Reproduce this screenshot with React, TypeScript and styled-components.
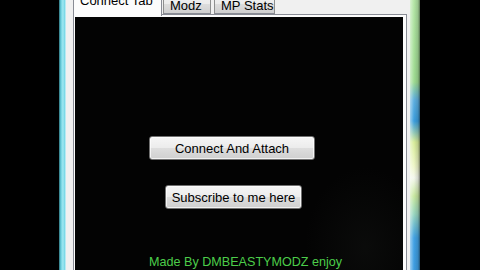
import styled, { createGlobalStyle } from 'styled-components';

const GlobalStyle = createGlobalStyle`
  html, body {
    margin: 0;
    padding: 0;
    background: #000;
    overflow: hidden;
  }
  body {
    font-family: "Liberation Sans", Arial, sans-serif;
  }
`;

const Screen = styled.div`
  width: 480px;
  height: 270px;
  display: flex;
  background: #000;
  overflow: hidden;
`;

const Window = styled.div`
  margin-left: 59px;
  width: 361px;
  height: 300px;
  margin-top: -8px;
  display: flex;
`;

const LeftGlass = styled.div`
  width: 7px;
  background: linear-gradient(
    to right,
    #2a6e78 0%,
    #68cedd 25%,
    #9fe8f2 55%,
    #7ad8e6 80%,
    #d8f4f8 100%
  );
`;

const RightGlass = styled.div`
  width: 10px;
  background: linear-gradient(
      to right,
      rgba(255, 255, 255, 0.5) 0%,
      rgba(255, 255, 255, 0) 40%,
      rgba(0, 0, 0, 0.15) 80%,
      rgba(0, 0, 0, 0.5) 100%
    ),
    linear-gradient(
      to bottom,
      #b6e6a8 0%,
      #9fdc92 30%,
      #5fb0e0 36%,
      #3b9ede 43%,
      #d8ec9a 50%,
      #eef6c8 58%,
      #f4f8ee 62%,
      #c9e8a0 68%,
      #9ad7c0 74%,
      #42a2e4 82%,
      #3a9ae0 100%
    );
`;

const Client = styled.div`
  flex: 1;
  background: #f0f0f0;
  padding: 0 3px 0 7px;
  display: flex;
  flex-direction: column;
`;

const TabStrip = styled.div`
  display: flex;
  align-items: flex-end;
  height: 22px;
  position: relative;
  z-index: 1;
`;

const Tab = styled.div<{ $active?: boolean; $width: number }>`
  box-sizing: border-box;
  width: ${p => p.$width}px;
  height: ${p => (p.$active ? 24 : 20)}px;
  margin-bottom: ${p => (p.$active ? -2 : 0)}px;
  margin-right: ${p => (p.$active ? 1 : 3)}px;
  padding: 0 6px;
  display: flex;
  align-items: flex-end;
  padding-bottom: ${p => (p.$active ? 8 : 0)}px;
  font-size: 13px;
  line-height: 15px;
  color: #000;
  white-space: nowrap;
  border: 1px solid ${p => (p.$active ? '#898c95' : '#8e8f8f')};
  border-bottom: ${p => (p.$active ? 'none' : '1px solid #898c95')};
  border-radius: 2px 2px 0 0;
  background: ${p =>
    p.$active
      ? '#fcfcfc'
      : 'linear-gradient(to bottom, #f2f2f2 0%, #ebebeb 50%, #dddddd 51%, #cfcfcf 100%)'};
`;

const Panel = styled.div`
  flex: 1;
  border: 1px solid #898c95;
  background: #fcfcfc;
  padding: 2px 3px 0 1px;
  display: flex;
`;

const Page = styled.div`
  flex: 1;
  background: radial-gradient(
      ellipse 60px 80px at 290px 230px,
      rgba(24, 26, 24, 0.35),
      rgba(0, 0, 0, 0) 100%
    ),
    #030303;
  display: flex;
  flex-direction: column;
  align-items: flex-start;
  padding: 119px 0 0 74px;
`;

const Button = styled.button<{ $width: number; $indent?: number }>`
  box-sizing: border-box;
  width: ${p => p.$width}px;
  height: 24px;
  margin-left: ${p => p.$indent ?? 0}px;
  border: 1px solid #707070;
  border-radius: 3px;
  background: linear-gradient(
    to bottom,
    #f6f6f6 0%,
    #ececec 48%,
    #dddddd 52%,
    #cfcfcf 100%
  );
  box-shadow: inset 0 0 0 1px rgba(255, 255, 255, 0.7);
  font-family: "Liberation Sans", Arial, sans-serif;
  font-size: 13px;
  color: #000;
  padding: 0;
  cursor: pointer;
`;

const ButtonGap = styled.div`
  height: 25px;
`;

const Credit = styled.div`
  margin-top: 46px;
  font-size: 12.6px;
  line-height: 15px;
  color: #4ccd4a;
  white-space: nowrap;
`;

export default function App() {
  return (
    <>
      <GlobalStyle />
      <Screen>
        <Window>
          <LeftGlass />
          <Client>
            <TabStrip>
              <Tab $active $width={89}>Connect Tab</Tab>
              <Tab $width={48}>Modz</Tab>
              <Tab $width={61}>MP Stats</Tab>
            </TabStrip>
            <Panel>
              <Page>
                <Button $width={166}>Connect And Attach</Button>
                <ButtonGap />
                <Button $width={137} $indent={16}>
                  Subscribe to me here
                </Button>
                <Credit>Made By DMBEASTYMODZ enjoy</Credit>
              </Page>
            </Panel>
          </Client>
          <RightGlass />
        </Window>
      </Screen>
    </>
  );
}
